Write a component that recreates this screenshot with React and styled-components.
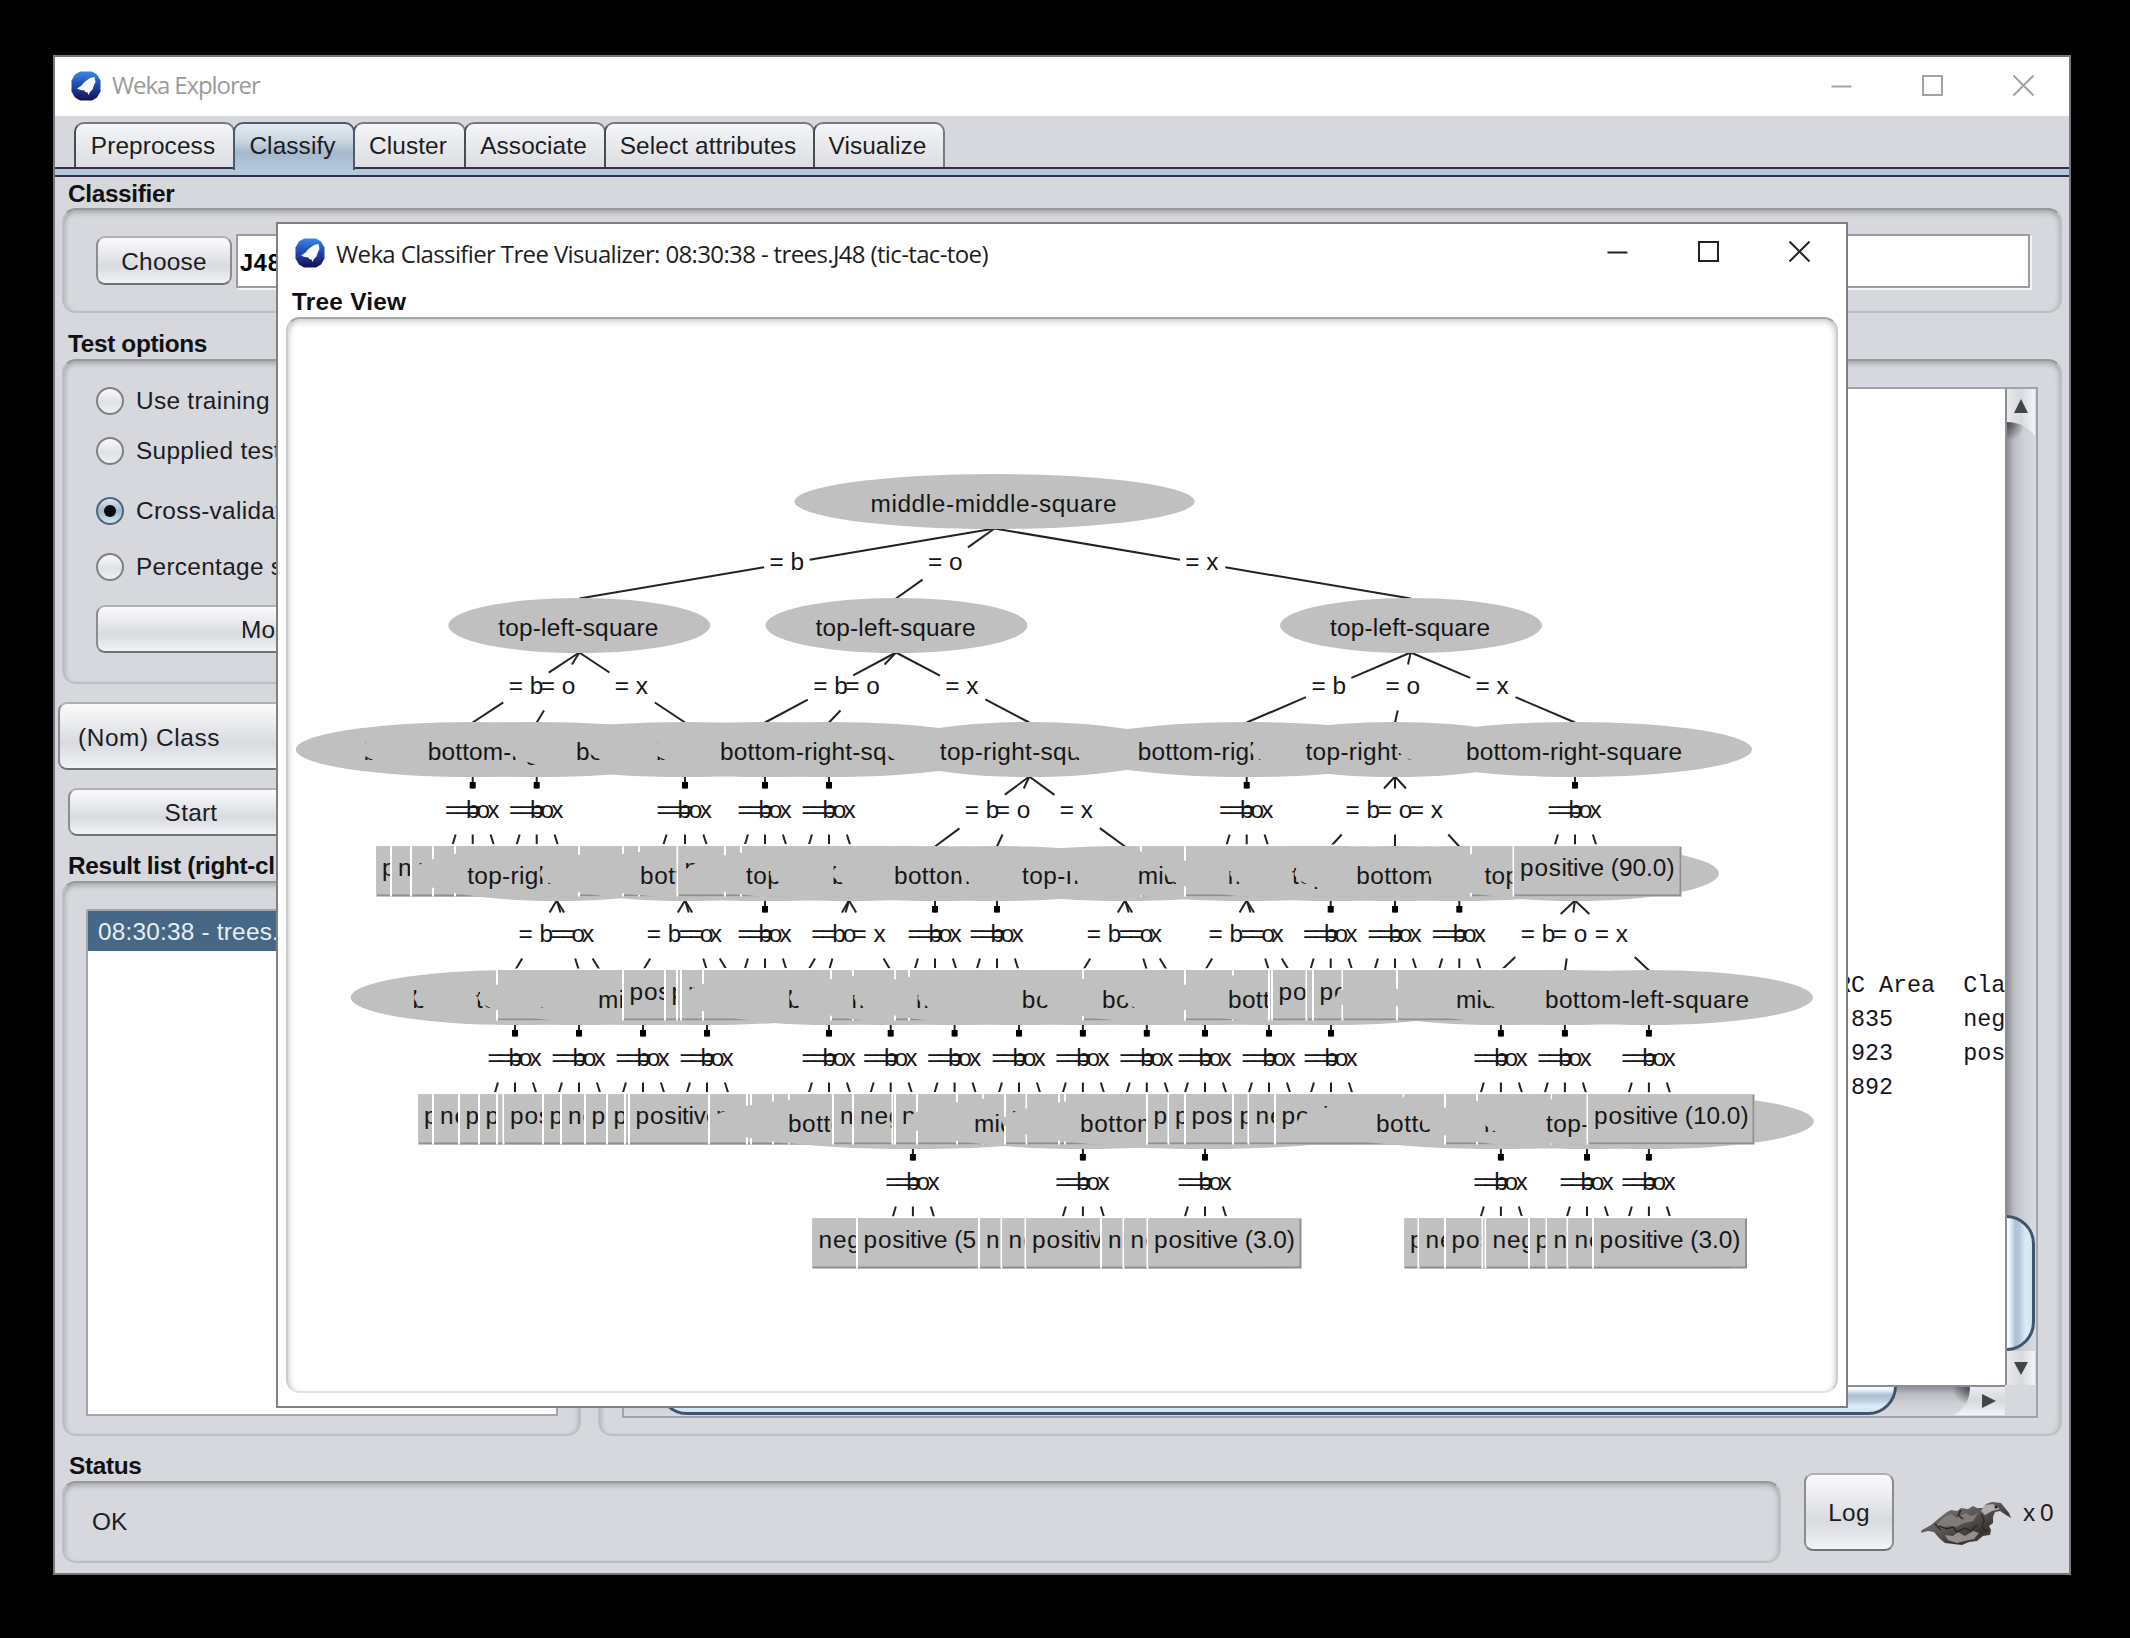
import React from "react";
import styled, { createGlobalStyle, css } from "styled-components";

const GlobalStyle = createGlobalStyle`
  * { box-sizing: border-box; }
  html, body { margin: 0; padding: 0; background: #000; }
`;

const SANS = `"Liberation Sans", Arial, sans-serif`;
const FACE = "#d6d8dd";

const Desktop = styled.div`
  position: relative;
  width: 2130px;
  height: 1638px;
  overflow: hidden;
  background: #000;
  color: #1c1c22;
  font: 24.4px ${SANS};
  letter-spacing: 0.1px;
  white-space: nowrap;
`;

/* ---------- window frames ---------- */

const Frame = styled.section`
  position: absolute;
  display: flex;
  flex-direction: column;
  left: ${(p) => p.$x}px;
  top: ${(p) => p.$y}px;
  width: ${(p) => p.$w}px;
  height: ${(p) => p.$h}px;
  background: ${(p) => p.$bg};
  border: 2px solid ${(p) => p.$edge};
`;

const TitleBar = styled.header`
  display: flex;
  align-items: center;
  flex: none;
  height: ${(p) => p.$h}px;
  padding: 0 ${(p) => p.$right}px 0 ${(p) => p.$left}px;
  background: #fff;
  > svg { margin-top: -1px; }
`;

const TitleText = styled.h1`
  flex: 1;
  margin: 0 0 0 11px;
  padding-bottom: ${(p) => p.$lift}px;
  font: 400 24px "Open Sans", "Noto Sans", sans-serif;
  letter-spacing: ${(p) => p.$track}px;
  color: ${(p) => p.$color};
`;

const Controls = styled.div`
  display: flex;
  align-items: center;
  gap: 70px;
  margin-top: -3px;
  color: ${(p) => p.$color};
  svg { display: block; }
`;

const WekaIcon = ({ id }) => (
  <svg width="30" height="30" viewBox="0 0 30 30">
    <defs>
      <linearGradient id={id} x1="0" y1="0" x2="0" y2="1">
        <stop offset="0" stopColor="#3b8ae0" />
        <stop offset="0.4" stopColor="#2350b8" />
        <stop offset="1" stopColor="#150f52" />
      </linearGradient>
    </defs>
    <path d="M9 0.500h12l5 3 3.500 6v11l-3.500 6-5 3H9l-5-3-3.500-6v-11l3.500-6z" fill={`url(#${id})`} />
    <path d="M23.500 6l-4.500 1-5.500 4-3 3.500-4.500 3 3.500 1.500 4 0.500 0.500 1.500 2.500 0.500 1 2.500 1.500-3 2.500-2.500 1.500-4.500 1.500-3z" fill="#f6f9ff" />
  </svg>
);

const WindowControls = ({ color, stroke }) => (
  <Controls $color={color}>
    <svg width="21" height="21" viewBox="0 0 21 21"><path d="M0.500 11.500h20" stroke={color} strokeWidth={stroke} /></svg>
    <svg width="21" height="21" viewBox="0 0 21 21"><path d="M1 1h19v19h-19z" fill="none" stroke={color} strokeWidth={stroke} /></svg>
    <svg width="21" height="21" viewBox="0 0 21 21"><path d="M0.500 0.500l20 20M20.500 0.500l-20 20" stroke={color} strokeWidth={stroke} /></svg>
  </Controls>
);

/* ---------- tabs ---------- */

const TabStrip = styled.nav`
  display: flex;
  flex: none;
  height: 51px;
  padding: 6px 0 0 19px;
  background: ${FACE};
`;

const Tab = styled.div`
  position: relative;
  width: ${(p) => p.$w}px;
  height: ${(p) => (p.$on ? 48 : 45)}px;
  line-height: 43px;
  text-align: center;
  text-indent: -3px;
  border: 2px solid #77797f;
  border-bottom: 0;
  border-left-color: #4a4b55;
  margin-left: ${(p) => (p.$first ? 0 : -2)}px;
  border-radius: 10px 10px 0 0;
  background: linear-gradient(#f6f7f9 0, #ebecef 35%, #dcdee2 100%);
  ${(p) => p.$on && css`
    z-index: 1;
    border-color: #4b5a6c;
    background: linear-gradient(#e4ecf2 0, #c6d3df 40%, #a6b8cb 62%, #b4c8dc 100%);
  `}
`;

const Stripe = styled.div`
  flex: none;
  height: 10px;
  background: #b6c8dc;
  border-top: 2px solid #31324a;
  border-bottom: 2px solid #31324a;
`;

/* ---------- panels ---------- */

const Body = styled.main`
  display: flex;
  flex-direction: column;
  padding: 0 ${(p) => p.$pad || 7}px;
`;

const Heading = styled.h2`
  flex: none;
  margin: 0;
  height: ${(p) => p.$h}px;
  padding: ${(p) => p.$top}px 0 0 ${(p) => p.$left || 6}px;
  font: bold 24.4px/${(p) => p.$h - p.$top}px ${SANS};
  color: #111;
  letter-spacing: ${(p) => p.$track ?? -0.35}px;
`;

const Panel = styled.div`
  display: flex;
  flex-direction: ${(p) => (p.$row ? "row" : "column")};
  align-items: ${(p) => p.$align || "stretch"};
  flex: none;
  height: ${(p) => p.$h}px;
  padding: ${(p) => p.$pad || "0"};
  border: 2px solid #bcbec3;
  border-top-color: #96989c;
  border-radius: 14px;
  box-shadow: inset 0 4px 5px -1px rgba(60, 60, 70, 0.28), inset 4px 0 4px -2px rgba(60, 60, 70, 0.1),
    inset -4px 0 4px -2px rgba(60, 60, 70, 0.1);
  ${(p) => p.$white && css`
    border-color: #c9cccb;
    border-top-color: #a6a8a7;
    border-bottom-color: #e0e2e1;
    box-shadow: inset 0 5px 6px -2px rgba(60, 60, 60, 0.22), inset 5px 0 5px -3px rgba(60, 60, 60, 0.15),
      inset -5px 0 5px -3px rgba(60, 60, 60, 0.15);
  `}
`;

const Button = styled.button`
  flex: none;
  width: ${(p) => p.$w}px;
  height: ${(p) => p.$h}px;
  margin: 0;
  padding: ${(p) => p.$pad || "2px 0 0"};
  font: inherit;
  letter-spacing: 0.25px;
  color: inherit;
  text-align: ${(p) => p.$align || "center"};
  border: 2px solid #8b8d92;
  border-top-color: #aeb0b4;
  border-bottom-color: #6f7175;
  border-radius: 9px;
  background: linear-gradient(#fafafb 0, #ecedf0 28%, #d9dbe0 60%, #e0e2e7 75%, #f2f4f8 100%);
`;

const MoreButton = styled(Button)`
  margin-top: 24px;
  padding: 1px 0 0 4px;
`;

const Combo = styled(Button)`
  margin: 18px 0 0 -4px;
  letter-spacing: 0.6px;
`;

const Field = styled.div`
  flex: 1;
  height: 54px;
  margin-left: 4px;
  padding: 2px 0 0 2px;
  font: bold 23.5px/50px ${SANS};
  letter-spacing: 0.8px;
  color: #000;
  background: #fff;
  border: 2px solid #9b9ca3;
  box-shadow: 2px 2px 0 #f3f4f6;
`;

const Columns = styled.div`
  display: flex;
  gap: 17px;
`;

const LeftColumn = styled.div`
  display: flex;
  flex-direction: column;
  width: 519px;
`;

const RightColumn = styled.div`
  display: flex;
  flex-direction: column;
  flex: 1;
`;

const RadioRow = styled.label`
  display: flex;
  align-items: center;
  flex: none;
  height: 28px;
  margin-top: ${(p) => p.$top}px;
  gap: 12px;
  letter-spacing: 0.3px;
`;

const RadioDot = styled.span`
  display: grid;
  place-items: center;
  width: 28px;
  height: 28px;
  border: 2px solid ${(p) => (p.$on ? "#51667c" : "#7f8186")};
  border-radius: 50%;
  background: ${(p) => (p.$on ? "linear-gradient(#dbe6f0, #a3b8cd 50%, #d5e4f2)" : "linear-gradient(#fafafb, #dfe1e5 55%, #eff0f3)")};
  &::after {
    content: "";
    width: 12px;
    height: 12px;
    border-radius: 50%;
    background: ${(p) => (p.$on ? "#0a0a0a" : "transparent")};
  }
`;

const ButtonRow = styled.div`
  display: flex;
  gap: 14px;
  margin: 18px 0 0 6px;
`;

const ResultList = styled.div`
  height: 507px;
  background: #fff;
  border: 2px solid #a3a5b4;
`;

const ResultItem = styled.div`
  height: 40px;
  padding: 1px 0 0 10px;
  line-height: 40px;
  letter-spacing: 0.2px;
  color: #e8eef4;
  background: #466886;
`;

/* ---------- output area ---------- */

const OutputBox = styled.div`
  display: grid;
  grid-template-columns: 1fr 31px;
  grid-template-rows: 1fr 31px;
  flex: 1;
  border: 2px solid #9fa2b1;
  background: ${FACE};
`;

const Output = styled.pre`
  margin: 0;
  display: flex;
  flex-direction: column;
  justify-content: flex-end;
  align-items: flex-end;
  overflow: hidden;
  padding: 0 0 280px;
  background: #fff;
  color: #14141c;
  font: 23.4px/34.100px "Liberation Mono", monospace;
  letter-spacing: -0.02px;
`;

const OutputLine = styled.div`
  width: 168px;
  overflow: hidden;
`;

const VTrack = styled.div`
  display: flex;
  flex-direction: column;
  overflow: hidden;
  border-left: 2px solid #8c8e96;
  background: radial-gradient(circle at 0 34px, #4a4b50 0, rgba(90, 90, 98, 0) 18px),
    linear-gradient(90deg, #8f9096 0, #bcbdc3 25%, #d0d1d7 60%, #d8dae0 100%);
`;

const HTrack = styled.div`
  display: flex;
  overflow: hidden;
  border-top: 2px solid #8c8e96;
  background: radial-gradient(circle at 1346px 0, #4a4b50 0, rgba(90, 90, 98, 0) 18px),
    linear-gradient(#8f9096 0, #bcbdc3 25%, #d0d1d7 60%, #d8dae0 100%);
`;

const Arrow = styled.div`
  display: grid;
  place-items: center;
  flex: none;
  width: ${(p) => p.$w}px;
  height: ${(p) => p.$h}px;
  background: linear-gradient(${(p) => p.$dir}, #e9ebee, #d6d9dd 50%, #f3f6f7);
  svg { display: block; }
`;

const UpCap = styled(Arrow)`
  height: 52px;
  place-items: start center;
  padding-top: 10px;
  clip-path: path("M0 0H30V50C24 40 14 33 0 33Z");
`;

const RightCap = styled(Arrow)`
  width: 52px;
  margin-left: auto;
  place-items: center end;
  padding-right: 9px;
  clip-path: path("M52 0H17C17 14 10 24 0 28H52Z");
`;

const VThumb = styled.div`
  flex: none;
  margin: ${(p) => p.$top}px 0 0 -30px;
  width: 58px;
  height: 136px;
  border: 3px solid #3e546c;
  border-radius: 29px;
  background: linear-gradient(90deg, #fff 48%, #f4f9fd 56%, #adbfd4 68%, #b6c8da 76%, #dcebf7 88%, #d3e4f0);
`;

const HThumb = styled.div`
  flex: none;
  margin: -30px 0 0 34px;
  width: 1239px;
  height: 58px;
  border: 3px solid #3e546c;
  border-radius: 29px;
  background: linear-gradient(#fff 48%, #f4f9fd 56%, #adbfd4 68%, #b6c8da 76%, #dcebf7 88%, #d3e4f0);
`;

/* ---------- status bar ---------- */

const StatusRow = styled.footer`
  display: flex;
`;

const StatusColumn = styled.div`
  display: flex;
  flex-direction: column;
  width: 1719px;
`;

const LogArea = styled.div`
  display: flex;
  align-items: flex-start;
  padding: 37px 0 0 23px;
`;

const Bird = styled.svg`
  margin: 29px 0 0 27px;
`;

const TaskCount = styled.span`
  margin: 26px 0 0 12px;
  letter-spacing: -1px;
`;

/* ---------- classifier tree ---------- */

// half width of the ellipse, half width of the text
const SHAPES = {
  "top-left-square": [131, 81],
  "top-right-square": [145, 89.5],
  "bottom-left-square": [165, 103],
  "middle-left-square": [165, 103],
  "top-middle-square": [165, 103],
  "bottom-right-square": [177, 109],
  "middle-right-square": [177, 109],
  "bottom-middle-square": [203, 125],
  "middle-middle-square": [200, 124],
};

const TL = "top-left-square", TR = "top-right-square", TM = "top-middle-square";
const BL = "bottom-left-square", BR = "bottom-right-square", BM = "bottom-middle-square";
const ML = "middle-left-square", MR = "middle-right-square", MM = "middle-middle-square";

const POS = "positive (3.0)", POS5 = "positive (5.0)", NEG = "negative (2.0)";
const POSX = "positive (3.0/1.0)", NEGX = "negative (4.0/1.0)";
const NEG2 = "negative (12.0)", POS2 = "positive (18.0)";

const BOX_WIDTH = {
  [POS]: 155, [POS5]: 155, [NEG]: 165, [POSX]: 196, [NEGX]: 206, [NEG2]: 178, [POS2]: 168,
  "positive (90.0)": 169, "positive (10.0)": 168,
};

// every level is painted left to right: [centre, attribute] or [left edge, leaf label]
const LEVELS = [
  { y: 474, nodes: [[994.5, MM]] },
  { y: 598, nodes: [[579.3, TL], [896.5, TL], [1411, TL]] },
  { y: 722, nodes: [[472.7, BR], [536.7, BR], [685, BR], [765, BR], [829, BR], [1029.3, TR], [1246.7, BR], [1395, TR], [1575, BR]] },
  { y: 846, nodes: [
    [374.5, POS], [390, NEG], [410, NEG], [432, NEG], [454, NEG], [556.7, TR], [578, NEG], [685, TR],
    [622, NEG], [638, NEGX], [765, BM], [676.5, NEGX], [724, NEG], [740, NEG2], [849, TM], [935, BL],
    [997, BL], [1125, TM], [1140, NEG], [1246.7, MR], [1184, NEG], [1330.7, ML], [1395, TM], [1459.3, BL],
    [1470, NEG], [1574, TR], [1512.5, "positive (90.0)"],
  ] },
  { y: 970, nodes: [
    [515.5, BL], [579, TM], [496, NEGX], [643, ML], [707, MR], [622, POSX], [664, POS], [676, POS2],
    [680, NEGX], [702, NEGX], [829, TR], [890.7, BL], [830, NEG], [852, NEG], [954.6, ML], [894, POS], [908, NEG2], [1019, ML],
    [1082.9, BL], [1146.8, BM], [1082, NEG], [1205, BL], [1269, TR], [1184, NEGX], [1232, POS], [1331, BL],
    [1268, NEG], [1271, POSX], [1305.5, POS2], [1312, POSX], [1341.5, POS2], [1500.9, BL], [1396, NEG], [1564.9, MR], [1648, BL],
  ] },
  { y: 1094, nodes: [
    [416.5, POS], [432, NEG], [458, POS], [478, POS], [496, NEG], [502.5, POSX], [542, POS], [560, NEG],
    [584, POS], [606, POS], [624, NEG], [628, POSX], [708, NEGX], [746, NEG], [750, POSX],
    [772, POSX], [788, NEG], [912.9, BM], [832, NEGX], [852, NEGX], [891.5, NEG], [894, NEGX], [916, NEGX],
    [956, NEG], [982, POS], [1082.9, MR], [1004, POSX], [1025.5, POSX], [1058, NEG], [1064, NEGX],
    [1205, BM], [1146, POS], [1167.5, POS], [1184, POS2], [1232, POS], [1247.5, NEG], [1274, POS],
    [1402.5, POS], [1500.9, BM], [1444, POS], [1476, POS2], [1587, ML], [1550.5, POS], [1648.9, TM], [1586.5, "positive (10.0)"],
  ] },
  { y: 1218, nodes: [
    [810.5, NEG], [856, POS5], [978, NEG], [1000.5, NEG], [1024.5, POS], [1100, NEG], [1122.5, NEG], [1146.5, POS],
    [1402.5, POS], [1417.5, NEG], [1444, POS], [1481.5, NEG], [1484.5, NEG], [1528, POS], [1545.5, NEG], [1566.5, NEG], [1592, POS],
  ] },
];

// [parent, three children]
const kids = (x, a = -20.6, b = 0, c = 21.6) => [x, x + a, x + b, x + c];
const EDGES = [
  [528, 598, [[994.5, 579.3, 896, 1410.7]]],
  [652, 722, [[579.3, 472.7, 536.7, 685], [896, 765, 829, 1029.3], [1410.7, 1246.7, 1395, 1575]]],
  [776, 846, [
    kids(472.7), kids(536.7), kids(685, -22.2, 0, 22.2), kids(765), kids(829), [1029.3, 935, 997, 1125],
    kids(1246.7), [1395, 1330.7, 1395, 1459.3], kids(1575),
  ]],
  [900, 970, [
    [556.7, 515, 579, 600], [685, 643, 707, 727], kids(765), [849, 808, 829, 890.7], kids(935), kids(997),
    [1125, 1083, 1147, 1167], [1246.7, 1205, 1269, 1289], kids(1330.7), kids(1395), kids(1459.3), [1575, 1501, 1565, 1649],
  ]],
  [1024, 1094, [515, 579, 643, 707, 829, 890.7, 954.6, 1019, 1082.9, 1146.8, 1205, 1269, 1331, 1500.9, 1564.9, 1648.9].map((x) => kids(x))],
  [1148, 1218, [912.9, 1082.9, 1205, 1500.9, 1587, 1648.9].map((x) => kids(x))],
];

const TreeCanvas = styled.svg`
  display: block;
  flex: none;
  text { font: 24.4px ${SANS}; letter-spacing: 0; fill: #161616; }
  line { stroke: #222; stroke-width: 2; }
`;

const Branch = ({ x0, y0, x1, y1, value, stub }) => {
  const dx = x1 - x0, dy = y1 - y0;
  const half = Math.min(22.7 / Math.abs(dx || 0.01), 23 / dy);
  const at = (t) => [x0 + dx * t, y0 + dy * t];
  const [ax, ay] = at(0.5 - half);
  const [bx, by] = at(0.5 + half);
  return (
    <g>
      {!stub && <line x1={x0} y1={y0} x2={ax} y2={ay} />}
      <line x1={bx} y1={by} x2={x1} y2={y1} />
      <text x={(x0 + x1) / 2 - 17.3} y={(y0 + y1) / 2 + 6}>{`= ${value}`}</text>
    </g>
  );
};

const Attribute = ({ x, y, label }) => {
  const [rx, half] = SHAPES[label];
  return (
    <g>
      <ellipse cx={x} cy={y + 27} rx={rx} ry="27.500" fill="#c0c0c0" />
      <text x={x - half} y={y + 37.5} textLength={half * 2 - 2}>{label}</text>
    </g>
  );
};

const Leaf = ({ x, y, label }) => {
  const w = BOX_WIDTH[label];
  const inset = label[0] === "n" ? 8 : 7.5;
  return (
    <g>
      <rect x={x} y={y - 2} width={w} height="52" fill="#fff" />
      <rect x={x + 2} y={y} width={w - 2} height="50" fill="#8f8f8f" />
      <rect x={x + 2} y={y} width={w - 4} height="48" fill="#c0c0c0" />
      <text x={x + inset} y={y + 29.5} dx="0 0.8 0.7 0.6 -0.3 -0.3 -0.2">{label}</text>
    </g>
  );
};

const Tree = () => (
  <TreeCanvas width="1546" height="1070" viewBox="288 318.500 1546 1070">
    {EDGES.map(([y0, y1, groups]) =>
      groups.map(([px, ...cs]) => {
        const tight = cs[2] - cs[0] < 50;
        return (
          <g key={`${y0}-${px}`}>
            {cs.map((cx, i) => (
              <Branch key={cx} x0={px} y0={y0} x1={cx} y1={y1} value={"box"[i]} stub={tight && i !== 1} />
            ))}
            {tight && <rect x={px - 3} y={y0 + 5.5} width="6" height="6.500" fill="#000" />}
          </g>
        );
      })
    )}
    {LEVELS.map(({ y, nodes }) =>
      nodes.map(([x, label]) =>
        SHAPES[label] ? (
          <Attribute key={`${y}${x}${label}`} x={x} y={y} label={label} />
        ) : (
          <Leaf key={`${y}${x}${label}`} x={x} y={y} label={label} />
        )
      )
    )}
  </TreeCanvas>
);

const BirdDrawing = () => (
  <Bird width="90" height="44" viewBox="0 0 90 44">
    <defs>
      <linearGradient id="plumage" x1="0" y1="0" x2="1" y2="1">
        <stop offset="0" stopColor="#8b8784" />
        <stop offset="0.45" stopColor="#5a5654" />
        <stop offset="0.7" stopColor="#353231" />
        <stop offset="1" stopColor="#97918e" />
      </linearGradient>
    </defs>
    <path d="M1 28l9-5 7-6 9-7 4-2 6 1 4-3 7 1 5-3 4 2 6 0 3-4 6-2 9 1 4 5 4 5 2 5-5-3-6-4-5 1-2 5 0 6-4 3 2 4-1 5-7 1-6 5-8 1-7 3-9-1-8-1-6-5-5-6-6-1-8 2z" fill="url(#plumage)" />
    <path d="M64 3l8-1 7 5-8 2-7 4-4-4z" fill="#b0adab" />
    <path d="M22 16l8-4 6 4 8-5 7 3 6-3-5 8-9 2-8 4-9-1-6 3-5-3z" fill="#8a8582" opacity="0.8" />
    <path d="M24 33l8 1 5-4 7 4 8-5 6 2-5 6-9 2-8 2-9-3z" fill="#a49c98" opacity="0.85" />
    <path d="M18 24l8 3 6-2 4 5 8-4 6 3 6-6M60 12l3 6-2 7 5 5M14 22l6 6M40 8l-3 5 5 4" stroke="#2b2928" strokeWidth="1.500" fill="none" />
    <circle cx="75" cy="5" r="1.500" fill="#222" />
  </Bird>
);

const TABS = [["Preprocess", 161], ["Classify", 122], ["Cluster", 113], ["Associate", 142], ["Select attributes", 211], ["Visualize", 132]];

const RADIOS = [
  ["Use training set", 26],
  ["Supplied test set", 22],
  ["Cross-validation", 32],
  ["Percentage split", 28],
];

const OUTPUT = ["RC Area  Class", ".835     negative", ".923     positive", ".892"];

export default function App() {
  return (
    <Desktop>
      <GlobalStyle />
      <Frame $x={53} $y={55} $w={2018} $h={1520} $bg={FACE} $edge="#77787b">
        <TitleBar $h={59} $left={16} $right={35}>
          <WekaIcon id="orbMain" />
          <TitleText $color="#9b9b9b" $track={-1.1} $lift={4}>Weka Explorer</TitleText>
          <WindowControls color="#a3a3a3" stroke={2} />
        </TitleBar>
        <TabStrip>
          {TABS.map(([name, w], i) => (
            <Tab key={name} $w={w} $first={i === 0} $on={name === "Classify"}>{name}</Tab>
          ))}
        </TabStrip>
        <Stripe />
        <Body>
          <Heading $h={31} $top={2}>Classifier</Heading>
          <Panel $row $h={105} $align="center" $pad="0 30px 0 32px">
            <Button $w={136} $h={49}>Choose</Button>
            <Field>J48 -C 0.25 -M 2</Field>
          </Panel>
          <Columns>
            <LeftColumn>
              <Heading $h={46} $top={15}>Test options</Heading>
              <Panel $h={325} $pad="0 32px">
                {RADIOS.map(([label, top]) => (
                  <RadioRow key={label} $top={top}>
                    <RadioDot $on={label === "Cross-validation"} />
                    {label}
                  </RadioRow>
                ))}
                <MoreButton $w={451} $h={48}>More options...</MoreButton>
              </Panel>
              <Combo $w={527} $h={68} $align="left" $pad="3px 0 0 18px">(Nom) Class</Combo>
              <ButtonRow>
                <Button $w={246} $h={48}>Start</Button>
                <Button $w={246} $h={48}>Stop</Button>
              </ButtonRow>
              <Heading $h={45} $top={15}>Result list (right-click for options)</Heading>
              <Panel $h={555} $pad="26px 21px 0 22px">
                <ResultList>
                  <ResultItem>08:30:38 - trees.J48</ResultItem>
                </ResultList>
              </Panel>
            </LeftColumn>
            <RightColumn>
              <Heading $h={46} $top={15}>Classifier output</Heading>
              <Panel $h={1077} $pad="26px 22px 19px">
                <OutputBox>
                  <Output>
                    {OUTPUT.map((line) => (
                      <OutputLine key={line}>{line}</OutputLine>
                    ))}
                  </Output>
                  <VTrack>
                    <UpCap $w={28} $dir="90deg">
                      <svg width="14" height="14"><path d="M7 0l7 14h-14z" fill="#444" /></svg>
                    </UpCap>
                    <VThumb $top={774} />
                    <Arrow $w={28} $h={34} $dir="90deg">
                      <svg width="14" height="13"><path d="M7 13l7-13h-14z" fill="#444" /></svg>
                    </Arrow>
                  </VTrack>
                  <HTrack>
                    <HThumb />
                    <RightCap $h={28} $dir="180deg">
                      <svg width="14" height="14"><path d="M14 7l-14 7v-14z" fill="#444" /></svg>
                    </RightCap>
                  </HTrack>
                </OutputBox>
              </Panel>
            </RightColumn>
          </Columns>
          <StatusRow>
            <StatusColumn>
              <Heading $h={45} $top={15} $left={7}>Status</Heading>
              <Panel $row $h={82} $align="center" $pad="0 0 0 28px">OK</Panel>
            </StatusColumn>
            <LogArea>
              <Button $w={90} $h={78}>Log</Button>
              <BirdDrawing />
              <TaskCount>x 0</TaskCount>
            </LogArea>
          </StatusRow>
        </Body>
      </Frame>

      <Frame $x={276} $y={222} $w={1572} $h={1186} $bg="#fff" $edge="#808080">
        <TitleBar $h={58} $left={17} $right={36}>
          <WekaIcon id="orbTree" />
          <TitleText $color="#1d1d1d" $track={-0.63} $lift={0}>
            Weka Classifier Tree Visualizer: 08:30:38 - trees.J48 (tic-tac-toe)
          </TitleText>
          <WindowControls color="#222" stroke={2} />
        </TitleBar>
        <Body $pad={8}>
          <Heading $h={34.5} $top={5} $left={6} $track={0.25}>Tree View</Heading>
          <Panel $white $h={1076}>
            <Tree />
          </Panel>
        </Body>
      </Frame>
    </Desktop>
  );
}
